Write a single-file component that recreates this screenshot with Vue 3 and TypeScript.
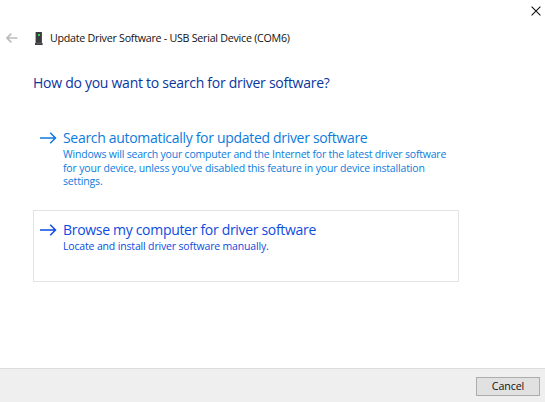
<script setup lang="ts">
interface Option {
  id: string
  title: string
  lines: string[]
}

const options: Option[] = [
  {
    id: 'search',
    title: 'Search automatically for updated driver software',
    lines: [
      'Windows will search your computer and the Internet for the latest driver software',
      "for your device, unless you've disabled this feature in your device installation",
      'settings.',
    ],
  },
  {
    id: 'browse',
    title: 'Browse my computer for driver software',
    lines: ['Locate and install driver software manually.'],
  },
]
</script>

<template>
  <div class="dialog">
    <div class="titlebar">
      <button class="close" aria-label="Close">
        <svg width="10" height="10" viewBox="0 0 10 10"><path d="M.6.6 9.4 9.4M9.4.6.6 9.4" stroke="#111" stroke-width="1.1" /></svg>
      </button>
    </div>
    <header class="header">
      <svg class="back" width="12" height="10" viewBox="0 0 12 10" fill="none" stroke="#bcbcbc" stroke-width="1.7">
        <path d="M11.5 5H1M5.3.7 1 5l4.3 4.3" />
      </svg>
      <svg class="device" width="8" height="13" viewBox="0 0 8 13">
        <path d="M.6 0h6.3v11h.7v2H0v-2h.6z" fill="#3b3b3f" />
        <path d="M.6 11.2h6.3" stroke="#77777b" stroke-width=".7" />
        <path d="M3 2h2v2H3z" fill="#27dc35" />
      </svg>
      <span class="name">Update Driver Software - USB Serial Device (COM6)</span>
    </header>
    <main class="content">
      <h1>How do you want to search for driver software?</h1>
      <button v-for="o in options" :key="o.id" class="option" :class="o.id">
        <svg class="arrow" width="17" height="12" viewBox="0 0 17 12" fill="none" stroke="currentColor" stroke-width="1.5">
          <path d="M0 6h15.5M10.2.7 15.5 6l-5.3 5.3" />
        </svg>
        <span class="text">
          <span class="title">{{ o.title }}</span>
          <span v-for="(line, i) in o.lines" :key="i" class="line" :class="'l' + i">{{ line }}</span>
        </span>
      </button>
    </main>
    <footer class="footer"><button class="cancel">Cancel</button></footer>
  </div>
</template>

<style>
body {
  background: #fff;
}
</style>

<style scoped>
.dialog {
  width: 545px;
  height: 402px;
  display: flex;
  flex-direction: column;
  background: #fff;
  overflow: hidden;
  box-sizing: border-box;
  font-family: 'Open Sans', 'Noto Sans', sans-serif;
  white-space: nowrap;
}
button {
  font: inherit;
  margin: 0;
  padding: 0;
  border: 0;
  border-radius: 0;
  background: none;
}
svg {
  display: block;
  flex: none;
}
.titlebar {
  height: 28px;
  display: flex;
  justify-content: flex-end;
  align-items: flex-start;
  padding: 6px 4px 0 0;
  box-sizing: border-box;
}
.header {
  height: 20px;
  display: flex;
  align-items: center;
  padding-left: 6px;
}
.device {
  margin-left: 17px;
}
.name {
  margin-left: 7px;
  font-size: 10.7px;
  line-height: 20px;
  letter-spacing: -0.26px;
  color: #111;
}
.content {
  flex: 1;
  padding: 24px 86px 0 33px;
}
h1 {
  margin: 0 0 27px;
  font-size: 14px;
  font-weight: 400;
  line-height: 22px;
  letter-spacing: -0.27px;
  color: #0a36a0;
}
.option {
  display: flex;
  align-items: flex-start;
  width: 426px;
  box-sizing: border-box;
  padding: 6px;
  border: 1px solid transparent;
  text-align: left;
}
.search {
  height: 89px;
  color: #0c7bdc;
}
.browse {
  height: 72px;
  padding-top: 9px;
  border-color: #e3e3e3;
  color: #0c4ce0;
}
.arrow {
  margin-top: 4px;
}
.text {
  margin-left: 6px;
  display: flex;
  flex-direction: column;
}
.title {
  font-size: 14px;
  line-height: 20px;
  letter-spacing: -0.31px;
}
.line {
  font-size: 10.5px;
  line-height: 13.5px;
  letter-spacing: -0.16px;
}
.search .l0 {
  letter-spacing: -0.195px;
}
.footer {
  height: 34px;
  box-sizing: border-box;
  border-top: 1px solid #dcdcdc;
  background: #efefef;
  display: flex;
  justify-content: flex-end;
  align-items: flex-start;
  padding: 8px 5px 0 0;
}
.cancel {
  width: 64px;
  height: 19px;
  border: 1px solid #adadad;
  background: #e1e1e1;
  font-size: 10.7px;
  line-height: 17px;
  letter-spacing: -0.1px;
  color: #111;
}
</style>
